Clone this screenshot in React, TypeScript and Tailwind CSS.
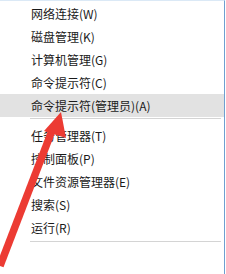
const topItems = [
  "网络连接(W)",
  "磁盘管理(K)",
  "计算机管理(G)",
  "命令提示符(C)",
];

const bottomItems = [
  "任务管理器(T)",
  "控制面板(P)",
  "文件资源管理器(E)",
  "搜索(S)",
  "运行(R)",
];

const Item = ({ label, active }: { label: string; active?: boolean }) => (
  <div
    className={`h-[23px] flex items-center pl-[31px] text-[12px] text-[#1a1a1a] ${
      active ? "bg-[#e2e2e2]" : ""
    }`}
  >
    {label}
  </div>
);

const App = () => {
  return (
    <div
      className="relative w-[226px] h-[274px] bg-white overflow-hidden"
      style={{ fontFamily: '"Noto Sans CJK SC", "Microsoft YaHei", sans-serif' }}
    >
      <div className="w-[225px] h-full border-r border-[#6f9fd0] border-t border-t-[#dbe9f6] pt-[1px]">
        {topItems.map((t) => (
          <Item key={t} label={t} />
        ))}
        <Item label="命令提示符(管理员)(A)" active />
        <div className="mt-[1px] mb-[5px] ml-[30px] mr-[3px] h-px bg-[#d4d4d4]" />
        {bottomItems.map((t) => (
          <Item key={t} label={t} />
        ))}
        <div className="mt-[2px] ml-[30px] mr-[3px] h-px bg-[#d4d4d4]" />
      </div>

      {/* red arrow */}
      <svg
        className="absolute left-0 top-0 pointer-events-none"
        width="226"
        height="274"
        viewBox="0 0 226 274"
      >
        <line
          x1="0"
          y1="266"
          x2="53"
          y2="128"
          stroke="#ec3b33"
          strokeWidth="7.5"
        />
        <polygon points="61,112 44,131 66,138" fill="#ec3b33" />
      </svg>
    </div>
  );
};

export default App;
